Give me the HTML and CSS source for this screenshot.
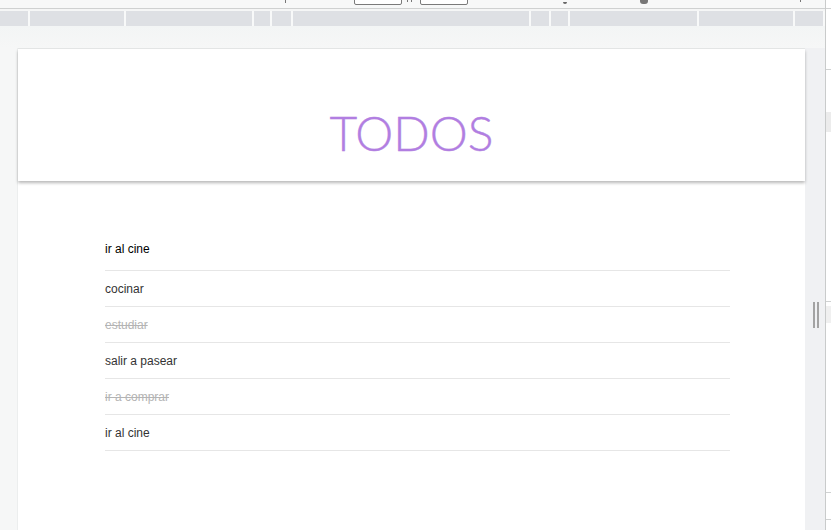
FILE: index.html
```html
<!DOCTYPE html>
<html lang="es">
<head>
<meta charset="utf-8">
<title>Todos</title>
<link rel="stylesheet" href="styles.css">
</head>
<body>
<div class="frame">
  <div class="main">
    <div class="topbar">
      <span class="tick t1"></span>
      <span class="box b1"></span>
      <span class="cross"></span>
      <span class="box b2"></span>
      <span class="tick t2"></span>
      <span class="tick t3"></span>
      <span class="tick t4"></span>
    </div>
    <div class="ruler">
      <span class="seg" style="width:28px"></span>
      <span class="seg" style="width:94px"></span>
      <span class="seg" style="width:126px"></span>
      <span class="seg" style="width:16px"></span>
      <span class="seg" style="width:19px"></span>
      <span class="seg" style="width:236px"></span>
      <span class="seg" style="width:18px"></span>
      <span class="seg" style="width:17px"></span>
      <span class="seg" style="width:127px"></span>
      <span class="seg" style="width:94px"></span>
      <span class="seg" style="width:28px"></span>
    </div>
    <div class="stage">
      <div class="card">
        <header class="card-head">
          <h1 class="title">TODOS</h1>
        </header>
        <section class="list">
          <div class="new-row">ir al cine</div>
          <ul class="items">
            <li class="item">cocinar</li>
            <li class="item done">estudiar</li>
            <li class="item">salir a pasear</li>
            <li class="item done">ir a comprar</li>
            <li class="item">ir al cine</li>
          </ul>
        </section>
      </div>
      <div class="scroll">
        <div class="grip"><span></span><span></span></div>
      </div>
    </div>
  </div>
  <div class="edge">
    <div class="edge-line l1"></div>
    <div class="edge-line l2"></div>
    <div class="edge-box bx1"></div>
    <div class="edge-line l3"></div>
    <div class="edge-box bx2"></div>
    <div class="edge-line l4"></div>
    <div class="edge-line l5"></div>
  </div>
</div>
</body>
</html>
```

FILE: styles.css
```css
* { box-sizing: border-box; }
html, body { margin: 0; padding: 0; }
body {
  width: 831px;
  height: 530px;
  overflow: hidden;
  font-family: "Liberation Sans", Arial, sans-serif;
  background: #f5f6f6;
}
.frame {
  display: flex;
  height: 530px;
}
.main {
  width: 825px;
  display: flex;
  flex-direction: column;
  height: 530px;
}
.topbar {
  height: 9px;
  background: #f7f8f8;
  border-bottom: 1px solid #cfd1d1;
  position: relative;
  overflow: hidden;
}
.box {
  position: absolute;
  top: -6px;
  height: 11px;
  width: 48px;
  border: 1px solid #7a7a7a;
  border-radius: 2px;
  background: #fff;
}
.b1 { left: 354px; }
.b2 { left: 420px; }
.cross {
  position: absolute;
  left: 407px;
  top: 0;
  width: 5px;
  height: 2px;
  border-left: 1px solid #777;
  border-right: 1px solid #777;
}
.tick {
  position: absolute;
  top: 0;
  width: 1px;
  height: 3px;
  background: #777;
}
.t1 { left: 285px; }
.t2 { left: 563px; width: 4px; height: 2px; top: 2px; border-radius: 0 0 2px 2px; background: #666; }
.t3 { left: 640px; width: 8px; height: 4px; top: 0; border-radius: 0 0 3px 3px; background: #777; }
.t4 { left: 800px; height: 2px; }
.ruler {
  display: flex;
  gap: 2px;
  margin-top: 2px;
  height: 15px;
  background: #f8f9f9;
}
.seg {
  height: 15px;
  background: #dee0e4;
}
.stage {
  flex: 1;
  display: flex;
  padding: 22px 0 0 18px;
  background: linear-gradient(180deg, #f3f5f5 0, #f6f7f7 22px);
  min-height: 0;
}
.card {
  width: 787px;
  background: #fff;
  border-top: 1px solid #e6e8e8;
  box-shadow: -1px 0 0 #eceeee;
}
.card-head {
  height: 132px;
  background: #fff;
  box-shadow: 0 2px 3px rgba(0, 0, 0, 0.28);
  display: flex;
  justify-content: center;
  padding-top: 51px;
  position: relative;
}
.title {
  margin: 0;
  font-family: "Lato", "Open Sans", sans-serif;
  font-weight: 300;
  font-size: 48px;
  line-height: 66px;
  color: #b17ee1;
  letter-spacing: 0;
  -webkit-text-stroke: 0.4px #b17ee1;
}
.list {
  padding: 46px 0 0 87px;
  width: 712px;
}
.new-row {
  height: 44px;
  line-height: 44px;
  font-size: 12px;
  color: #000;
  border-bottom: 1px solid #e6e6e6;
}
.items {
  list-style: none;
  margin: 0;
  padding: 0;
}
.item {
  height: 36px;
  line-height: 37px;
  font-size: 12px;
  color: #333;
  border-bottom: 1px solid #e6e6e6;
}
.item.done {
  color: #b4b4b4;
  text-decoration: line-through;
}
.scroll {
  width: 20px;
  background: #f0f1f3;
  padding-top: 254px;
  display: flex;
  justify-content: center;
}
.grip {
  display: flex;
  gap: 2px;
  height: 26px;
  margin-left: 2px;
}
.grip span {
  width: 2px;
  background: #a3a3a3;
}
.edge {
  width: 6px;
  border-left: 1px solid #c9cbcb;
  background: #fff;
  display: flex;
  flex-direction: column;
}
.edge-line { height: 1px; background: #d0d2d2; }
.l1 { margin-top: 8px; }
.l2 { margin-top: 60px; }
.edge-box { background: #ececec; }
.edge-line.l2 + .edge-box { margin-top: 42px; height: 20px; }
.edge-box + .edge-line { margin-top: 169px; }
.bx2 { height: 17px; margin-top: 4px; background: #f0f0f0; }
.l4 { margin-top: 26px; }
.l5 { margin-top: 26px; }
```
